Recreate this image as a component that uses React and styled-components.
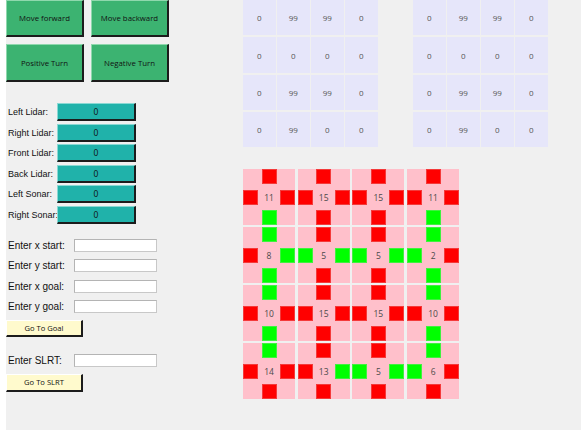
import React from "react";
import styled, { createGlobalStyle, css } from "styled-components";

const Global = createGlobalStyle`
  html, body { margin: 0; padding: 0; background: #ffffff; }
  body { font-family: "Liberation Sans", Arial, sans-serif; }
`;

const raised = (bg, light) => css`
  background: ${bg};
  border-style: solid;
  border-width: 1px 2px 2px 1px;
  border-color: ${light} #1c1c1c #1c1c1c ${light};
  box-sizing: border-box;
`;

const Panel = styled.div`
  margin-left: 6px;
  width: 575px;
  height: 430px;
  background: #f0f0f0;
  display: flex;
  overflow: hidden;
`;

const LeftColumn = styled.div`
  width: 237px;
  display: flex;
  flex-direction: column;
  align-items: flex-start;
`;

const ButtonGrid = styled.div`
  display: grid;
  grid-template-columns: 78px 78px;
  grid-template-rows: 37px 38px;
  column-gap: 7px;
  row-gap: 7px;
`;

const MoveButton = styled.button`
  ${raised("#3cb371", "#8fd8ad")}
  font-family: "Open Sans", "Noto Sans", sans-serif;
  font-size: 7.8px;
  color: #111;
  padding: 0;
  margin: 0;
  cursor: pointer;
`;

const SensorList = styled.div`
  margin-top: 21px;
  display: flex;
  flex-direction: column;
  gap: 2.5px;
`;

const SensorRow = styled.div`
  display: grid;
  grid-template-columns: 49px 79px;
  height: 18px;
  align-items: center;
  padding-left: 2px;
`;

const Label = styled.span`
  font-size: 9px;
  color: #111;
  white-space: nowrap;
  overflow: visible;
`;

const SensorValue = styled.div`
  ${raised("#20b2aa", "#8ad9d4")}
  height: 18px;
  display: flex;
  align-items: center;
  justify-content: center;
  font-family: "Open Sans", "Noto Sans", sans-serif;
  font-size: 8.5px;
  color: #111;
`;

const EntryList = styled.div`
  margin-top: ${(p) => p.$top}px;
  display: flex;
  flex-direction: column;
  gap: 7.3px;
`;

const EntryRow = styled.div`
  display: grid;
  grid-template-columns: 66px 83px;
  height: 13px;
  align-items: center;
  padding-left: 2px;
`;

const EntryLabel = styled(Label)`
  font-size: 10px;
`;

const Entry = styled.input`
  box-sizing: border-box;
  width: 83px;
  height: 13px;
  background: #ffffff;
  border: 1px solid #c8c8c8;
  border-top-color: #b4b4b4;
  border-left-color: #b4b4b4;
  padding: 0 2px;
  margin: 0;
  font-size: 9px;
  outline: none;
`;

const ActionButton = styled.button`
  ${raised("#fffacd", "#ffffff")}
  margin-top: ${(p) => p.$top}px;
  width: 77px;
  height: ${(p) => p.$h}px;
  padding: 0;
  font-family: "Open Sans", "Noto Sans", sans-serif;
  font-size: 7.6px;
  color: #111;
  cursor: pointer;
`;

const RightColumn = styled.div`
  display: flex;
  flex-direction: column;
`;

const TopGrids = styled.div`
  display: flex;
  gap: 35.5px;
`;

const SmallGrid = styled.div`
  display: grid;
  grid-template-columns: repeat(4, 32.5px);
  grid-template-rows: 35px 36px 35px 35px;
  column-gap: 1.5px;
  row-gap: 2px;
`;

const SmallCell = styled.div`
  background: #e6e6fa;
  display: flex;
  align-items: center;
  justify-content: center;
  font-family: "Open Sans", "Noto Sans", sans-serif;
  font-size: 8px;
  color: #555;
`;

const MazeGrid = styled.div`
  margin-top: 22px;
  display: grid;
  grid-template-columns: repeat(4, 52px);
  grid-template-rows: repeat(4, 56px);
  column-gap: 2.7px;
  row-gap: 2px;
`;

const MazeCell = styled.div`
  background: #ffc0cb;
  display: grid;
  grid-template-columns: repeat(3, 15px);
  grid-template-rows: repeat(3, 15px);
  justify-content: space-between;
  align-content: space-between;
`;

const Wall = styled.div`
  grid-column: ${(p) => p.$col};
  grid-row: ${(p) => p.$row};
  background: ${(p) => (p.$open ? "#00ff00" : "#ff0000")};
  box-shadow: inset 0 0 0 1px ${(p) => (p.$open ? "#40f040" : "#f43a3a")};
`;

const CellNumber = styled.div`
  grid-column: 2;
  grid-row: 2;
  display: flex;
  align-items: center;
  justify-content: center;
  font-family: "Open Sans", "Noto Sans", sans-serif;
  font-size: 8.5px;
  color: #4a4a4a;
`;

const smallData = [
  [0, 99, 99, 0],
  [0, 0, 0, 0],
  [0, 99, 99, 0],
  [0, 99, 0, 0],
];

// [value, N, W, E, S] : true = green (open), false = red (wall)
const G = true;
const R = false;
const maze = [
  [[11, R, R, R, G], [15, R, R, R, R], [15, R, R, R, R], [11, R, R, R, G]],
  [[8, G, R, G, G], [5, R, G, G, R], [5, R, G, G, R], [2, G, G, R, G]],
  [[10, G, R, R, G], [15, R, R, R, R], [15, R, R, R, R], [10, G, R, R, G]],
  [[14, G, R, R, R], [13, R, R, G, R], [5, R, G, G, R], [6, G, G, R, R]],
];

const sensors = ["Left Lidar:", "Right Lidar:", "Front Lidar:", "Back Lidar:", "Left Sonar:", "Right Sonar:"];
const entries = ["Enter x start:", "Enter y start:", "Enter x goal:", "Enter y goal:"];

function SmallTable() {
  return (
    <SmallGrid>
      {smallData.flat().map((v, i) => (
        <SmallCell key={i}>{v}</SmallCell>
      ))}
    </SmallGrid>
  );
}

export default function App() {
  return (
    <>
      <Global />
      <Panel>
        <LeftColumn>
          <ButtonGrid>
            <MoveButton>Move forward</MoveButton>
            <MoveButton>Move backward</MoveButton>
            <MoveButton>Positive Turn</MoveButton>
            <MoveButton>Negative Turn</MoveButton>
          </ButtonGrid>
          <SensorList>
            {sensors.map((s) => (
              <SensorRow key={s}>
                <Label>{s}</Label>
                <SensorValue>0</SensorValue>
              </SensorRow>
            ))}
          </SensorList>
          <EntryList $top={15.5}>
            {entries.map((e) => (
              <EntryRow key={e}>
                <EntryLabel>{e}</EntryLabel>
                <Entry />
              </EntryRow>
            ))}
          </EntryList>
          <ActionButton $top={7} $h={17}>Go To Goal</ActionButton>
          <EntryList $top={17}>
            <EntryRow>
              <EntryLabel>Enter SLRT:</EntryLabel>
              <Entry />
            </EntryRow>
          </EntryList>
          <ActionButton $top={7} $h={18}>Go To SLRT</ActionButton>
        </LeftColumn>
        <RightColumn>
          <TopGrids>
            <SmallTable />
            <SmallTable />
          </TopGrids>
          <MazeGrid>
            {maze.flat().map(([v, n, w, e, s], i) => (
              <MazeCell key={i}>
                <Wall $col={2} $row={1} $open={n} />
                <Wall $col={1} $row={2} $open={w} />
                <CellNumber>{v}</CellNumber>
                <Wall $col={3} $row={2} $open={e} />
                <Wall $col={2} $row={3} $open={s} />
              </MazeCell>
            ))}
          </MazeGrid>
        </RightColumn>
      </Panel>
    </>
  );
}
